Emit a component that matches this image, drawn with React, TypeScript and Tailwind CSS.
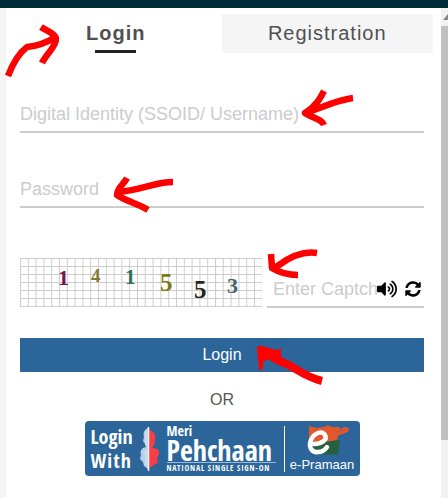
import { FaSyncAlt, FaVolumeUp } from "react-icons/fa";

const field =
  "block h-[35px] w-full border-b-2 border-[#cccccc] bg-transparent text-lg leading-6 text-gray-700 outline-none placeholder:text-[#cccccc] placeholder:opacity-100";

const digits = [
  { value: "1", x: 38, y: 27, color: "#74164c", size: 22 },
  { value: "4", x: 71, y: 24, color: "#857a32", size: 19 },
  { value: "1", x: 105, y: 26, color: "#2f7358", size: 21 },
  { value: "5", x: 140, y: 33, color: "#7b7c12", size: 25 },
  { value: "5", x: 174, y: 40, color: "#25251c", size: 25 },
  { value: "3", x: 207, y: 35, color: "#466668", size: 22 },
];

function Captcha() {
  return (
    <svg className="h-[50px] w-[242px] shrink-0" viewBox="0 0 242 50" role="img" aria-label="Captcha image">
      <defs>
        <pattern id="grid" width="7.8" height="8" patternUnits="userSpaceOnUse">
          <path d="M0.5 0V8M0 0.5H7.8" stroke="#cdcdcd" strokeWidth="1" />
        </pattern>
      </defs>
      <rect width="242" height="49" fill="url(#grid)" />
      {digits.map((d) => (
        <text key={d.x} x={d.x} y={d.y} fill={d.color} fontSize={d.size} fontWeight="700" className="font-['Liberation_Serif',serif]">
          {d.value}
        </text>
      ))}
    </svg>
  );
}

function TwinFaces() {
  return (
    <svg className="h-[46px] w-[20px] shrink-0" viewBox="0 0 20 46" aria-hidden="true">
      <path d="M8 2C4 4 3 7 4 11L3 15L5 18L6 21C1 22 0 25 1 29L0 33L3 36L4 40L8 43Z" fill="#b9d0e8" />
      <path d="M9 4C14 5 16 9 15 14C15 17 14 20 12 22C17 22 20 24 19 28L17 32L18 36C15 39 12 39 9 43Z" fill="#fb3d43" />
      <path d="M8.500 1V45" stroke="#f2f6fa" strokeWidth="1.500" />
      <path d="M6 5V20M6 24V39" stroke="#e1ebf4" strokeWidth="1" />
    </svg>
  );
}

function PramaanMark() {
  return (
    <svg className="h-[33px] w-[56px]" viewBox="0 0 56 33" aria-hidden="true">
      <path d="M15 2C23 5 29 4 34 1C38 4 42 3 46 3L43 17L30 18L15 18Z" fill="#e2582c" />
      <path d="M29 17C34 19 39 16 46 16L44 31C37 29 32 32 27 30L18 31V25Z" fill="#24613c" />
      <path d="M37 9L51 3L55 4L54 8L40 13Z" fill="#e2582c" />
      <path d="M43 8L51 5" stroke="#8f4b45" strokeWidth="1" strokeDasharray="2 2" />
      <path d="M20 20C27 20 34 16 31 11C28 6 20 9 17 16C14 23 18 29 24 28C28 28 31 26 33 23" fill="none" stroke="#fff" strokeWidth="4.500" strokeLinecap="round" />
    </svg>
  );
}

function Arrows() {
  return (
    <svg className="pointer-events-none absolute top-0 left-0 h-[498px] w-[448px]" viewBox="0 0 448 498" fill="none" stroke="#ff0000" strokeWidth="6.5" strokeLinejoin="round" aria-hidden="true">
      <path d="M8 76C13 63 19 53 27 47C36 46 46 43 54 38M41 27C47 31 56 34 56 39C56 47 46 54 42 63" />
      <path d="M353 98C337 100 323 107 306 113M324 91C320 99 316 106 305 113C310 117 322 119 324 125" />
      <path d="M173 182C154 182 143 190 118 192M127 178C124 184 117 188 117 195C126 201 138 204 148 210" />
      <path d="M317 253C303 251 290 257 279 265L272 269M271 254L272 268C280 273 287 275 298 275" />
      <path d="M322 381C306 377 298 370 287 364C277 361 270 355 260 350" strokeWidth="8" />
      <path d="M257 348C257 346 260 346 262 346L276 350L281 349V358L268 359L263 362V369L259 370Z" fill="#ff0000" stroke="none" />
    </svg>
  );
}

export default function App() {
  return (
    <div className="relative min-h-screen overflow-hidden bg-white font-['Liberation_Sans',Arial,sans-serif]">
      <header className="h-2 bg-[#002b3b]" />
      <div className="flex">
        <div className="w-[6px] shrink-0 bg-[#f6f6f6]" />
        <main className="min-w-0 flex-1 pt-[6px] pr-2">
          <div className="flex pl-1 text-xl tracking-wider text-[#505050]" role="tablist">
            <button type="button" role="tab" aria-selected="true" className="flex h-[39px] flex-1 flex-col items-center justify-between pt-[5px] leading-7 font-bold">
              Login
              <span className="h-[3px] w-[41px] bg-[#222222]" />
            </button>
            <button type="button" role="tab" aria-selected="false" className="flex h-[39px] flex-1 justify-center bg-[#f5f5f5] pt-[5px] leading-7">
              Registration
            </button>
          </div>
          <form className="pr-[9px] pl-[14px]" onSubmit={(e) => e.preventDefault()}>
            <input aria-label="Digital Identity" placeholder="Digital Identity (SSOID/ Username)" className={`${field} mt-[45px]`} />
            <input type="password" aria-label="Password" placeholder="Password" className={`${field} mt-10`} />
            <div className="mt-[50px] flex gap-[5px]">
              <Captcha />
              <div className="flex min-w-0 flex-1 items-end border-b-2 border-[#cccccc] pb-[5px] pl-[6px]">
                <input aria-label="Enter Captcha" placeholder="Enter Captcha" className="h-6 min-w-0 flex-1 bg-transparent text-lg leading-6 outline-none placeholder:text-[#cccccc] placeholder:opacity-100" />
                <button type="button" aria-label="Play captcha audio" className="flex h-6 items-center">
                  <FaVolumeUp size={20} />
                </button>
                <button type="button" aria-label="Refresh captcha" className="mr-[3px] ml-2 flex h-6 items-center">
                  <FaSyncAlt size={16} />
                </button>
              </div>
            </div>
            <button type="submit" className="mt-[30px] block h-[34px] w-full bg-[#2b659a] text-base text-white">
              Login
            </button>
            <p className="mt-4 text-center text-base leading-6 text-[#555555]">OR</p>
            <a href="#pehchaan" className="mx-auto mt-[9px] flex h-[55px] w-[275px] items-center rounded-sm bg-[#2b659a] pl-[6px] text-white">
              <span className="flex w-[49px] flex-col text-xl leading-6 font-bold font-['Open_Sans_Condensed','Liberation_Sans',sans-serif]">
                <span>Login</span>
                <span className="tracking-wider">With</span>
              </span>
              <TwinFaces />
              <span className="ml-[7px] flex w-[109px] flex-col whitespace-nowrap font-['Open_Sans_Condensed','Liberation_Sans',sans-serif]">
                <span className="text-sm leading-[14px] font-bold">Meri</span>
                <span className="border-b border-[#9ab9d5] text-[28px] leading-6 font-extrabold">Pehchaan</span>
                <span className="text-[8px] leading-[10px] font-bold tracking-widest">NATIONAL SINGLE SIGN-ON</span>
              </span>
              <span className="ml-2 h-[46px] w-px bg-white" />
              <span className="flex flex-1 flex-col items-center">
                <PramaanMark />
                <span className="text-[13px] leading-4">e-Pramaan</span>
              </span>
            </a>
          </form>
        </main>
        <div className="flex min-h-[490px] w-[7px] shrink-0 flex-col items-end bg-[#f1f1f1]" aria-hidden="true">
          <svg className="h-[18px] w-[7px]" viewBox="0 0 7 18">
            <path d="M2 12L7 6V12Z" fill="#858585" />
          </svg>
          <div className="h-[414px] w-[7px] bg-[#c1c1c1]" />
        </div>
      </div>
      <Arrows />
    </div>
  );
}
